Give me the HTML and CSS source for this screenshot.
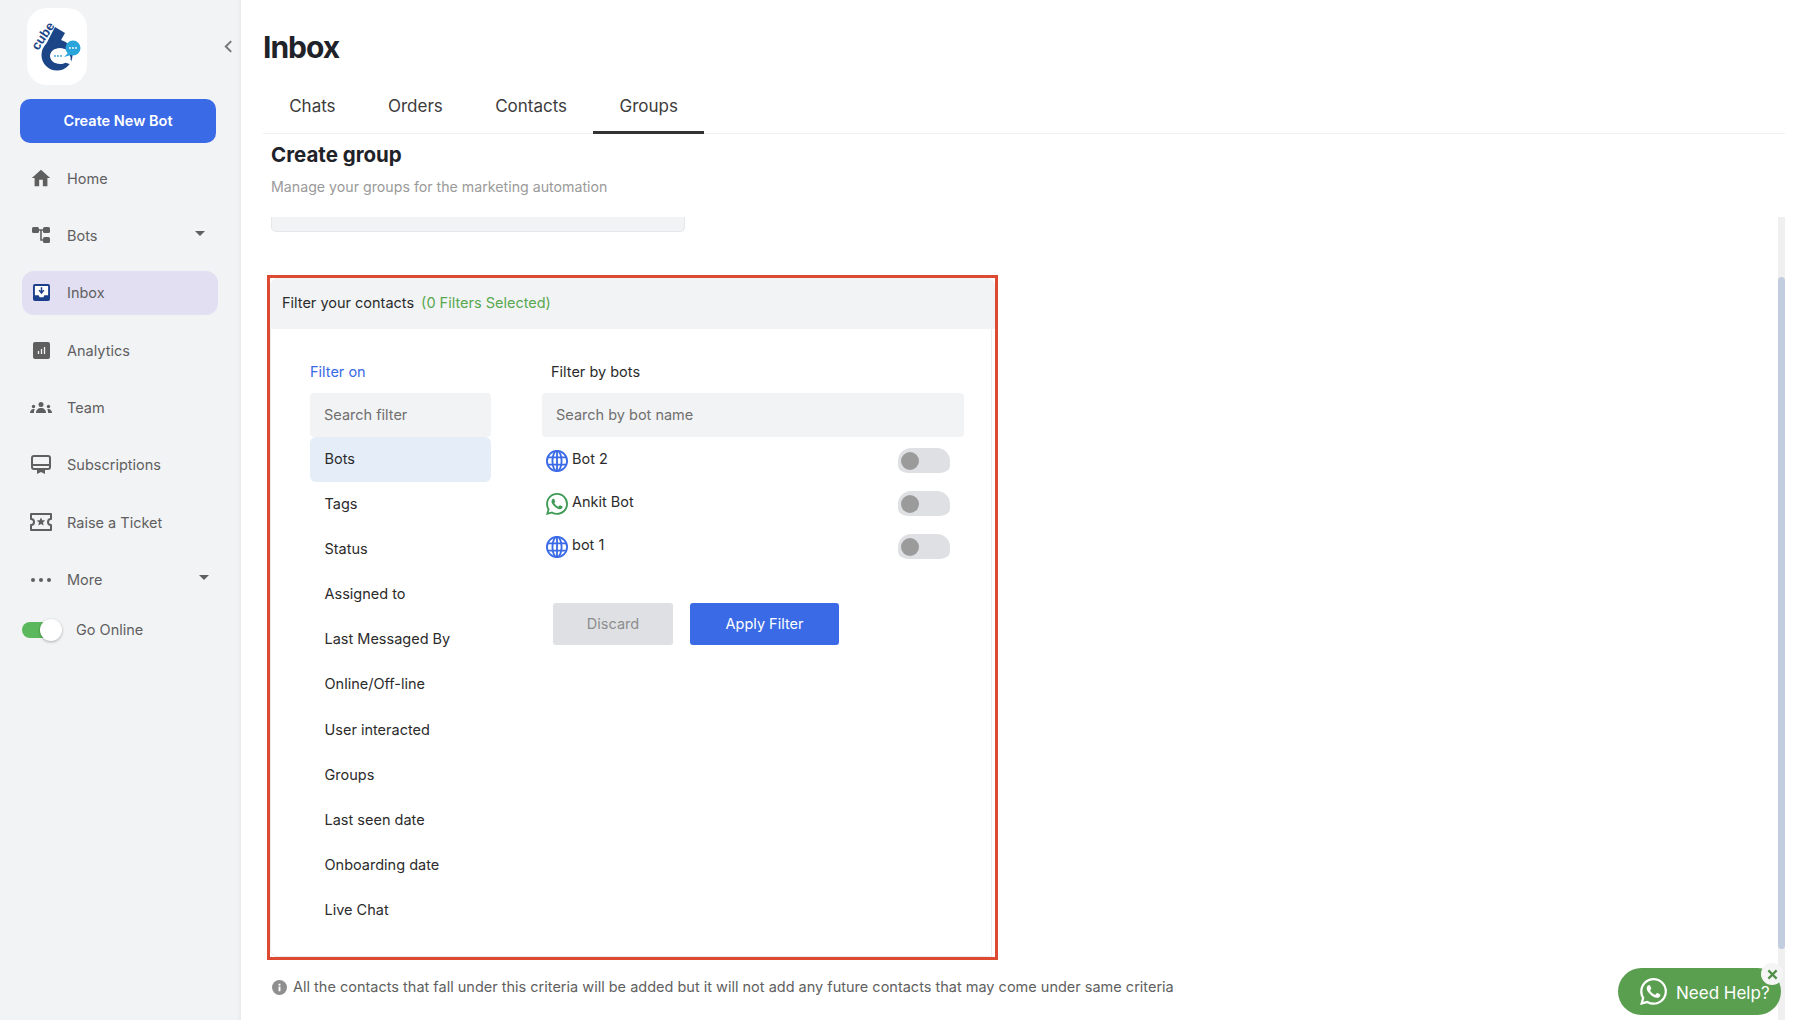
FILE: index.html
```html
<!DOCTYPE html>
<html lang="en">
<head>
<meta charset="utf-8">
<title>Inbox</title>
<link rel="stylesheet" href="styles.css">
</head>
<body>
<div class="app">
  <aside class="sidebar">
    <div class="logo-row">
      <div class="logo">
        <svg viewBox="0 0 60 77" width="60" height="77">
          <polygon points="28,19 38,25 24,50 15,44" fill="#1c4587"/>
          <circle cx="30" cy="47" r="15.500" fill="#1c4587"/>
          <path d="M33 40c-5.500 0-10 3.600-10 8s4.500 8 10 8c2 0 4-.4 5.500-1.300L46 57l-2.500-5.500c.3-1.100.5-2.300-.500-3.500 0-4.400-4.500-8-10-8z" fill="#fff"/>
          <circle cx="46" cy="40" r="7.500" fill="#2aa5dc"/>
          <path d="M41 45l-4 4 7-2z" fill="#2aa5dc"/>
          <g fill="#fff"><circle cx="43" cy="40" r=".9"/><circle cx="46" cy="40" r=".9"/><circle cx="49" cy="40" r=".9"/></g>
          <g fill="#2aa5dc"><circle cx="28" cy="48" r=".9"/><circle cx="31" cy="48" r=".9"/><circle cx="34" cy="48" r=".9"/></g>
          <text class="logo-text" transform="translate(11 43) rotate(-56)">cube</text>
        </svg>
      </div>
      <svg class="collapse" viewBox="0 0 10 16" width="9" height="15"><path d="M8 2L2 8l6 6" fill="none" stroke="#777" stroke-width="2.2"/></svg>
    </div>
    <button class="create">Create New Bot</button>
    <nav class="nav">
      <a class="nav-item"><span class="nav-icon"><svg viewBox="0 0 24 24" width="22" height="22"><path d="M10 21v-7h4v7h5v-9h3L12 3 2 12h3v9z" fill="#5f5f5f"/></svg></span>Home</a>
      <a class="nav-item"><span class="nav-icon"><svg viewBox="0 0 20 20" width="20" height="20"><g fill="#5f5f5f"><rect x="1" y="2" width="7" height="6" rx="1.5"/><rect x="12" y="2" width="7" height="6" rx="1.5"/><rect x="12" y="12" width="7" height="6" rx="1.5"/></g><path d="M8 5h4M10 5v10h2" fill="none" stroke="#5f5f5f" stroke-width="1.6"/></svg></span>Bots<span class="caret"></span></a>
      <a class="nav-item active"><span class="nav-icon"><svg viewBox="0 0 18 18" width="17" height="17"><rect width="18" height="18" rx="2" fill="#1c3f8c"/><path d="M2 2h14v10h-4l-1 2H7l-1-2H2z" fill="#fff"/><path d="M9 3.500v5M6.500 6.500L9 9.500l2.500-3" fill="none" stroke="#1c3f8c" stroke-width="1.6"/></svg></span>Inbox</a>
      <a class="nav-item"><span class="nav-icon"><svg viewBox="0 0 17 17" width="17" height="17"><rect width="17" height="17" rx="2" fill="#5f5f5f"/><path d="M5.500 9v3M8.500 7v5M11.500 5v7" stroke="#f2f3f5" stroke-width="1.300"/></svg></span>Analytics</a>
      <a class="nav-item"><span class="nav-icon"><svg viewBox="0 0 22 12" width="22" height="12"><g fill="#5f5f5f"><circle cx="11" cy="2.500" r="2.500"/><path d="M6 11c0-3 2-5 5-5s5 2 5 5z"/><circle cx="3.500" cy="4.500" r="1.700"/><path d="M0 11c0-2.300 1.500-4 3.500-4 .5 0 1 .1 1.300.3C4 8.300 4 10 4 11z"/><circle cx="18.500" cy="4.500" r="1.700"/><path d="M22 11c0-2.300-1.500-4-3.500-4-.5 0-1 .1-1.300.3.8 1 .8 2.700.8 3.700z"/></g></svg></span>Team</a>
      <a class="nav-item"><span class="nav-icon"><svg viewBox="0 0 20 20" width="20" height="20"><rect x="1" y="1" width="18" height="13" rx="2" fill="none" stroke="#5f5f5f" stroke-width="2"/><path d="M1 10h18" stroke="#5f5f5f" stroke-width="2"/><path d="M6 14h8v5l-4-2-4 2z" fill="#5f5f5f"/></svg></span>Subscriptions</a>
      <a class="nav-item"><span class="nav-icon"><svg viewBox="0 0 22 18" width="22" height="18"><path d="M1 1h20v5a3 3 0 0 0 0 6v5H1v-5a3 3 0 0 0 0-6z" fill="none" stroke="#5f5f5f" stroke-width="2" stroke-linejoin="round"/><path d="M11 4.500l1.300 2.800 3 .3-2.300 2 .7 3L11 11l-2.700 1.600.7-3-2.300-2 3-.3z" fill="#5f5f5f"/></svg></span>Raise a Ticket</a>
      <a class="nav-item"><span class="nav-icon"><svg viewBox="0 0 22 6" width="22" height="6"><g fill="#5f5f5f"><circle cx="3" cy="3" r="2"/><circle cx="11" cy="3" r="2"/><circle cx="19" cy="3" r="2"/></g></svg></span>More<span class="caret caret-more"></span></a>
    </nav>
    <div class="online">
      <span class="online-toggle"><span class="online-knob"></span></span>
      <span>Go Online</span>
    </div>
  </aside>

  <main class="main">
    <h1 class="title">Inbox</h1>
    <div class="tabs">
      <a class="tab">Chats</a>
      <a class="tab">Orders</a>
      <a class="tab">Contacts</a>
      <a class="tab current">Groups</a>
    </div>
    <div class="page-head">
      <h2 class="page-title">Create group</h2>
      <p class="page-sub">Manage your groups for the marketing automation</p>
    </div>
    <div class="scroll">
      <div class="scroll-content">
        <div class="stub"></div>
        <section class="highlight">
          <header class="filter-head">Filter your contacts <span class="selected">(0 Filters Selected)</span></header>
          <div class="filter-body">
            <div class="filter-left">
              <div class="filter-label">Filter on</div>
              <div class="search">Search filter</div>
              <ul class="filter-list">
                <li class="on">Bots</li>
                <li>Tags</li>
                <li>Status</li>
                <li>Assigned to</li>
                <li>Last Messaged By</li>
                <li>Online/Off-line</li>
                <li>User interacted</li>
                <li>Groups</li>
                <li>Last seen date</li>
                <li>Onboarding date</li>
                <li>Live Chat</li>
              </ul>
            </div>
            <div class="filter-right">
              <div class="filter-title">Filter by bots</div>
              <div class="search">Search by bot name</div>
              <div class="bot-rows">
                <div class="bot-row">
                  <svg class="bot-icon" viewBox="0 0 24 24"><g fill="none" stroke="#3a6ae6" stroke-width="2"><circle cx="12" cy="12" r="11"/><ellipse cx="12" cy="12" rx="5" ry="11"/><path d="M12 1v22M2 8h20M2 16h20"/></g></svg>
                  <span class="bot-name">Bot 2</span><span class="switch"><span class="knob"></span></span>
                </div>
                <div class="bot-row">
                  <svg class="bot-icon" viewBox="0 0 24 24"><path fill="#3f9a55" d="M17.472 14.382c-.297-.149-1.758-.867-2.03-.967-.273-.099-.471-.148-.67.15-.197.297-.767.966-.94 1.164-.173.199-.347.223-.644.075-.297-.15-1.255-.463-2.39-1.475-.883-.788-1.48-1.761-1.653-2.059-.173-.297-.018-.458.13-.606.134-.133.298-.347.446-.52.149-.174.198-.298.298-.497.099-.198.05-.371-.025-.52-.075-.149-.669-1.612-.916-2.207-.242-.579-.487-.5-.669-.51-.173-.008-.371-.01-.57-.01-.198 0-.52.074-.792.372-.272.297-1.04 1.016-1.04 2.479 0 1.462 1.065 2.875 1.213 3.074.149.198 2.096 3.2 5.077 4.487.709.306 1.262.489 1.694.625.712.227 1.36.195 1.871.118.571-.085 1.758-.719 2.006-1.413.248-.694.248-1.289.173-1.413-.074-.124-.272-.198-.57-.347m-5.421 7.403h-.004a9.87 9.87 0 01-5.031-1.378l-.361-.214-3.741.982.998-3.648-.235-.374a9.86 9.86 0 01-1.51-5.26c.001-5.45 4.436-9.884 9.888-9.884 2.64 0 5.122 1.03 6.988 2.898a9.825 9.825 0 012.893 6.994c-.003 5.45-4.437 9.884-9.885 9.884m8.413-18.297A11.815 11.815 0 0012.05 0C5.495 0 .16 5.335.157 11.892c0 2.096.547 4.142 1.588 5.945L.057 24l6.305-1.654a11.882 11.882 0 005.683 1.448h.005c6.554 0 11.89-5.335 11.893-11.893a11.821 11.821 0 00-3.48-8.413z"/></svg>
                  <span class="bot-name">Ankit Bot</span><span class="switch"><span class="knob"></span></span>
                </div>
                <div class="bot-row">
                  <svg class="bot-icon" viewBox="0 0 24 24"><g fill="none" stroke="#3a6ae6" stroke-width="2"><circle cx="12" cy="12" r="11"/><ellipse cx="12" cy="12" rx="5" ry="11"/><path d="M12 1v22M2 8h20M2 16h20"/></g></svg>
                  <span class="bot-name">bot 1</span><span class="switch"><span class="knob"></span></span>
                </div>
              </div>
              <div class="actions">
                <button class="discard">Discard</button>
                <button class="apply">Apply Filter</button>
              </div>
            </div>
          </div>
        </section>
        <p class="note">
          <svg class="note-icon" viewBox="0 0 16 16" width="15" height="15"><circle cx="8" cy="8" r="8" fill="#8f8f8f"/><rect x="7" y="7" width="2" height="5" fill="#fff"/><rect x="7" y="4" width="2" height="2" fill="#fff"/></svg>
          All the contacts that fall under this criteria will be added but it will not add any future contacts that may come under same criteria
        </p>
      </div>
      <div class="scrollbar"><div class="thumb"></div></div>
    </div>
    <div class="help">
      <svg viewBox="0 0 24 24" width="27" height="27"><path fill="#fff" d="M17.472 14.382c-.297-.149-1.758-.867-2.03-.967-.273-.099-.471-.148-.67.15-.197.297-.767.966-.94 1.164-.173.199-.347.223-.644.075-.297-.15-1.255-.463-2.39-1.475-.883-.788-1.48-1.761-1.653-2.059-.173-.297-.018-.458.13-.606.134-.133.298-.347.446-.52.149-.174.198-.298.298-.497.099-.198.05-.371-.025-.52-.075-.149-.669-1.612-.916-2.207-.242-.579-.487-.5-.669-.51-.173-.008-.371-.01-.57-.01-.198 0-.52.074-.792.372-.272.297-1.04 1.016-1.04 2.479 0 1.462 1.065 2.875 1.213 3.074.149.198 2.096 3.2 5.077 4.487.709.306 1.262.489 1.694.625.712.227 1.36.195 1.871.118.571-.085 1.758-.719 2.006-1.413.248-.694.248-1.289.173-1.413-.074-.124-.272-.198-.57-.347m-5.421 7.403h-.004a9.87 9.87 0 01-5.031-1.378l-.361-.214-3.741.982.998-3.648-.235-.374a9.86 9.86 0 01-1.51-5.26c.001-5.45 4.436-9.884 9.888-9.884 2.64 0 5.122 1.03 6.988 2.898a9.825 9.825 0 012.893 6.994c-.003 5.45-4.437 9.884-9.885 9.884m8.413-18.297A11.815 11.815 0 0012.05 0C5.495 0 .16 5.335.157 11.892c0 2.096.547 4.142 1.588 5.945L.057 24l6.305-1.654a11.882 11.882 0 005.683 1.448h.005c6.554 0 11.89-5.335 11.893-11.893a11.821 11.821 0 00-3.48-8.413z"/></svg>
      <span class="help-label">Need Help?</span>
      <span class="help-close"><svg viewBox="0 0 12 12" width="11" height="11"><path d="M1.500 1.500l9 9M10.500 1.500l-9 9" stroke="#4f8f47" stroke-width="2.400"/></svg></span>
    </div>
  </main>
</div>
</body>
</html>
```

FILE: styles.css
```css
* { box-sizing: border-box; }
html, body { margin: 0; height: 100%; overflow: hidden; }
body { font-family: Inter, "Noto Sans", sans-serif; background: #fff; color: #2b2b2b; font-size: 14px; }
.app { display: flex; height: 100vh; }

.sidebar { width: 241px; flex: none; background: #f2f3f5; box-shadow: inset -3px 0 3px -1px rgba(0,0,0,.04); display: flex; flex-direction: column; }
.logo-row { display: flex; padding: 8px 0 0 27px; height: 99px; align-items: flex-start; }
.logo { width: 60px; height: 77px; background: #fff; border-radius: 20px; }
.logo svg { display: block; overflow: visible; }
.logo-text { font: 700 13px "Liberation Sans", sans-serif; fill: #1c4587; }
.collapse { margin: 31px 0 0 137px; }
.create { width: 196px; height: 44px; margin-left: 20px; padding: 0 0 2px; border: 0; border-radius: 10px; background: #3a6ae6; color: #fff; font: 600 14.5px Inter, sans-serif; }
.nav { display: flex; flex-direction: column; gap: 13.4px; margin: 13px 0 0 22px; width: 196px; }
.nav-item { height: 44px; display: flex; align-items: center; color: #5f5f5f; font-size: 14.5px; border-radius: 12px; position: relative; }
.nav-icon { width: 45px; padding-left: 8px; display: flex; justify-content: center; padding-right: 15px; flex: none; }
.active { background: #e3dff3; }
.caret { margin-left: auto; margin-right: 13px; width: 0; height: 0; border: 5px solid transparent; border-top: 5px solid #5f5f5f; border-bottom: 0; margin-top: -4px; }
.caret-more { margin-right: 9px; }
.online { display: flex; align-items: center; margin: 15px 0 0 22px; color: #5f5f5f; font-size: 14.5px; height: 26px; gap: 15px; }
.online-toggle { width: 39px; height: 16px; border-radius: 8px; background: #5cb85c; position: relative; display: block; }
.online-knob { position: absolute; right: -1px; top: -3px; width: 22px; height: 22px; border-radius: 50%; background: #fff; box-shadow: 0 1px 3px rgba(0,0,0,.3); }

.main { flex: 1; min-width: 0; padding: 0 21px 0 22px; display: flex; flex-direction: column; position: relative; }
.title { margin: 0; height: 86px; padding-top: 27px; font-size: 30px; line-height: 40px; font-weight: 700; letter-spacing: -1px; color: #1f2329; }
.tabs { display: flex; height: 48px; border-bottom: 1px solid #eeeff1; flex: none; }
.tab { padding: 0 26.2px 8px; height: 48px; display: flex; align-items: center; font-size: 17px; color: #3c3c3c; }
.tab.current { border-bottom: 3px solid #333; padding-bottom: 5px; }
.page-head { padding: 7px 0 0 8px; height: 83px; flex: none; }
.page-title { margin: 0; font-size: 20.5px; line-height: 28px; font-weight: 700; color: #1f2329; }
.page-sub { margin: 8px 0 0; font-size: 14.2px; line-height: 20px; color: #9a9a9a; }

.scroll { flex: 1; display: flex; min-height: 0; justify-content: space-between; }
.scroll-content { flex: 1; min-width: 0; overflow: hidden; }
.stub { width: 414px; height: 15px; margin-left: 8px; background: #f2f3f5; border: 1px solid #e6e7ea; border-top: 0; border-radius: 0 0 5px 5px; }
.highlight { width: 731px; height: 685px; margin: 43px 0 0 4px; border: 3px solid #dd4a32; background: #fff; display: flex; flex-direction: column; }
.filter-head { height: 51px; background: #f2f3f5; padding: 0 0 2px 12px; display: flex; align-items: center; gap: 7px; font-size: 14.5px; color: #2b2b2b; border-radius: 8px 8px 0 0; flex: none; }
.selected { color: #57a84f; }
.filter-body { flex: 1; display: flex; border: 1px solid #ececee; border-top: 0; border-bottom-left-radius: 8px; margin-right: 3px; }
.filter-left { width: 181px; margin-left: 39px; padding-top: 33px; flex: none; }
.filter-label { height: 20px; line-height: 20px; margin-bottom: 11px; color: #3a6ae6; font-size: 14.5px; }
.filter-right { width: 422px; margin-left: 51px; padding-top: 33px; flex: none; }
.filter-title { height: 20px; line-height: 20px; margin: 0 0 11px 9px; font-size: 14.5px; color: #2b2b2b; }
.search { height: 44px; background: #f2f3f5; border-radius: 4px; padding-left: 14px; line-height: 43px; color: #6f6f6f; font-size: 14.5px; }
.filter-list { list-style: none; margin: 0; padding: 0; }
.filter-list li { height: 45.1px; line-height: 44.5px; padding-left: 14.5px; font-size: 14.5px; color: #2b2b2b; border-radius: 6px; }
.filter-list li.on { background: #e5edf9; }
.bot-rows { padding-top: 2px; }
.bot-row { height: 43px; display: flex; align-items: center; padding: 0 14px 0 4px; font-size: 14.5px; color: #2b2b2b; }
.bot-icon { width: 22px; height: 22px; margin-right: 4px; flex: none; }
.bot-name { margin-top: -5px; }
.switch { margin-left: auto; width: 52px; height: 25px; border-radius: 13px 13px 11px 11px / 13px 13px 7px 7px; background: #dfe0e3; display: flex; align-items: center; padding-left: 3px; }
.knob { width: 18px; height: 18px; border-radius: 50%; background: #9b9b9b; }
.actions { display: flex; gap: 17px; margin: 35px 0 0 11px; }
.discard, .apply { height: 42px; border: 0; padding: 0 0 2px; border-radius: 3px; font: 14.5px Inter, sans-serif; }
.discard { width: 120px; background: #dfe0e3; color: #8d8d8d; }
.apply { width: 149px; background: #3a6ae6; color: #fff; }
.note { margin: 17px 0 0 9px; display: flex; align-items: center; gap: 6px; color: #5f5f5f; font-size: 14.5px; line-height: 20px; white-space: nowrap; }
.note-icon { flex: none; }
.scrollbar { width: 7px; background: #f0f0f1; padding-top: 60px; flex: none; }
.thumb { height: 672px; background: #c3cde0; border-radius: 4px; }

.help { position: absolute; right: 25px; bottom: 5px; width: 163px; height: 47px; border-radius: 24px; background: #5a9e50; color: #fff; display: flex; align-items: center; padding-left: 22px; gap: 9px; font-size: 17px; }
.help-label { margin-top: 2px; }
.help-close { position: absolute; right: -2px; top: -5px; width: 22px; height: 22px; border-radius: 50%; background: #f4f5f4; display: flex; align-items: center; justify-content: center; }
```
